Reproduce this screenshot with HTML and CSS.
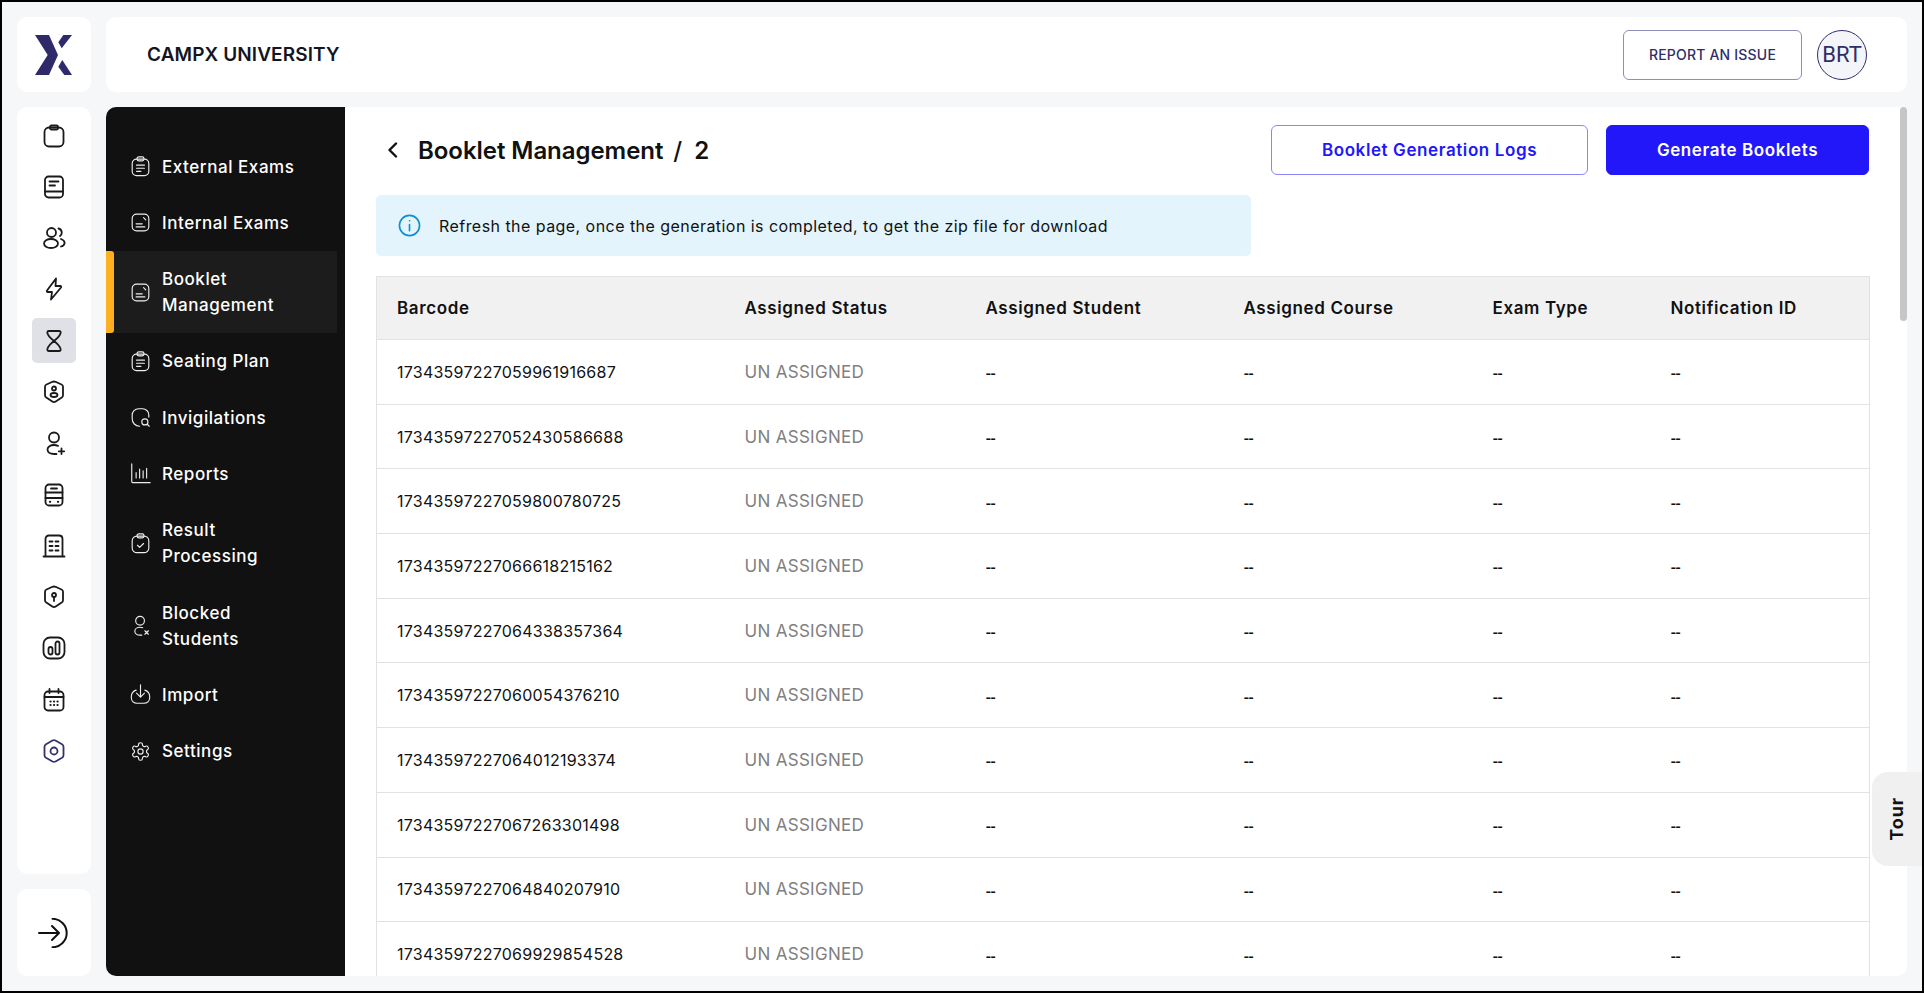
FILE: index.html
```html
<!DOCTYPE html>
<html lang="en">
<head>
<meta charset="utf-8">
<title>Booklet Management</title>
<link rel="stylesheet" href="styles.css">
</head>
<body>
<div class="frame">
  <div class="shell">
    <div class="logo-card">
      <svg class="logo" viewBox="0 0 38 40"><path d="M0 0h14l9 20-9 20H0l12.700-20z"/><path d="M37 0h-8.700l-5 7.300 3.400 6z"/><path d="M37 40h-7.700l-6-8.300 4-6.700z"/></svg>
    </div>
    <header class="topbar">
      <div class="brand">CAMPX UNIVERSITY</div>
      <div class="top-actions">
        <button class="report">REPORT AN ISSUE</button>
        <div class="avatar">BRT</div>
      </div>
    </header>
    <div class="rail-col">
      <nav class="rail">
        <a class="rail-item"><svg viewBox="0 0 24 24"><rect x="2.500" y="3.500" width="19" height="19" rx="4.500"/><rect x="8" y="1.500" width="8" height="4" rx="1.500"/></svg></a>
        <a class="rail-item"><svg viewBox="0 0 24 24"><rect x="3" y="1.500" width="18" height="21" rx="3.500"/><path d="M3 16.500h18M7.500 6.500h9M7.500 10.500h5.500"/></svg></a>
        <a class="rail-item"><svg viewBox="0 0 24 24"><circle cx="9.500" cy="6.500" r="4.500"/><ellipse cx="9" cy="17.500" rx="7" ry="4.500"/><path d="M16.500 2.500a4.200 4.200 0 0 1 1.500 7.500M19 13c2.500 1 4 2.500 3.500 4.500-.3 1.500-1.500 2.500-3.500 3"/></svg></a>
        <a class="rail-item"><svg viewBox="0 0 24 24"><path d="M14 1.500 5 13.500c-.5.7 0 1.500.7 1.500H10l-1 7.500 10-12c.5-.7 0-1.500-.7-1.500H13.500z"/></svg></a>
        <a class="rail-item active"><svg viewBox="0 0 24 24"><path d="M7 2h10c1.500 0 2 1.200 1.500 2.500C17.500 7.500 14.500 10 12 12 9.500 10 6.500 7.500 5.500 4.500 5 3.200 5.500 2 7 2zM7 22h10c1.500 0 2-1.200 1.500-2.500C17.500 16.500 14.500 14 12 12 9.500 14 6.500 16.500 5.500 19.500 5 20.800 5.500 22 7 22z"/></svg></a>
        <a class="rail-item"><svg viewBox="0 0 24 24"><path d="M10.500 1.800 4.500 4.500C3.500 5 3 5.700 3 6.800v8.400c0 1 .5 1.800 1.300 2.400l6 4c1 .7 2.400.7 3.400 0l6-4c.8-.6 1.300-1.400 1.300-2.400V6.800c0-1.100-.5-1.800-1.500-2.300l-6-2.700c-1-.4-2-.4-3 0z"/><circle cx="12" cy="8.500" r="2"/><ellipse cx="12" cy="15" rx="3.500" ry="2"/></svg></a>
        <a class="rail-item"><svg viewBox="0 0 24 24"><circle cx="12" cy="6.500" r="5"/><path d="M16 14.800c-1.200-.5-2.600-.8-4-.8-3.500 0-6.500 2-6.500 4.500S8 23 12 23h2.500M19.500 17.500v5.500M16.800 20.300h5.400"/></svg></a>
        <a class="rail-item"><svg viewBox="0 0 24 24"><rect x="3.500" y="1.500" width="17" height="21" rx="3.500"/><path d="M3.500 9.500h17M3.500 15h17M9 5.500h6"/><path class="dot" d="M8 18.800h.1M16 18.800h.1"/></svg></a>
        <a class="rail-item"><svg viewBox="0 0 24 24"><path d="M1.500 22.500h21M3.500 22.500V5c0-2 1.500-3.500 3.500-3.500h10c2 0 3.500 1.500 3.500 3.500v17.500M7.500 7.500h3M13.500 7.500h3M7.500 12h3M13.500 12h3M7.500 16.500h3M13.500 16.500h3"/></svg></a>
        <a class="rail-item"><svg viewBox="0 0 24 24"><path d="M10.500 1.800 4.500 4.500C3.500 5 3 5.700 3 6.800v8.400c0 1 .5 1.800 1.300 2.400l6 4c1 .7 2.400.7 3.400 0l6-4c.8-.6 1.300-1.400 1.300-2.400V6.800c0-1.100-.5-1.800-1.500-2.300l-6-2.700c-1-.4-2-.4-3 0z"/><circle cx="12" cy="10" r="2"/><path d="M12 12v4"/></svg></a>
        <a class="rail-item"><svg viewBox="0 0 24 24"><rect x="1.500" y="1.500" width="21" height="21" rx="6.500"/><rect x="6.500" y="11" width="4" height="7.500" rx="2"/><rect x="13.500" y="5.500" width="4" height="13" rx="2"/></svg></a>
        <a class="rail-item"><svg viewBox="0 0 24 24"><rect x="2.500" y="3.500" width="19" height="19" rx="3.500"/><path d="M2.500 9h19M7.500 1v4M16.500 1v4"/><path class="dot" d="M8.500 13.500h.1M12 13.500h.1M15.500 13.500h.1M8.500 17h.1M12 17h.1M15.500 17h.1"/></svg></a>
        <a class="rail-item brand-icon"><svg viewBox="0 0 24 24"><path d="M10.500 1.500 4 5.200C3 5.800 2.500 6.700 2.500 7.800v8.400c0 1.100.5 2 1.500 2.600l6.500 3.700c1 .5 2 .5 3 0l6.500-3.700c1-.6 1.500-1.500 1.500-2.600V7.800c0-1.100-.5-2-1.500-2.600l-6.500-3.700c-1-.5-2-.5-3 0z"/><circle cx="12" cy="12" r="3.500"/></svg></a>
      </nav>
      <div class="rail-foot">
        <svg viewBox="0 0 32 30"><path d="M1 15h20M14 8l7 7-7 7M14.500 .8a14.200 14.200 0 0 1 0 28.400"/></svg>
      </div>
    </div>
    <div class="workspace">
      <aside class="menu">
        <a class="menu-item"><svg viewBox="0 0 24 24"><rect x="2.500" y="3.500" width="19" height="19" rx="5"/><rect x="8" y="1" width="8" height="4.500" rx="2"/><path d="M7.500 10.500h9M7.500 14h9M7.500 17.500h5"/></svg><span>External Exams</span></a>
        <a class="menu-item"><svg viewBox="0 0 24 24"><rect x="2.500" y="2.500" width="19" height="19" rx="5"/><path d="M7 13.500h7M7 17h10M15.500 6.500l2.500 2.500"/></svg><span>Internal Exams</span></a>
        <a class="menu-item active"><svg viewBox="0 0 24 24"><rect x="2.500" y="2.500" width="19" height="19" rx="5"/><path d="M7 13.500h7M7 17h10M15.500 6.500l2.500 2.500"/></svg><span>Booklet Management</span></a>
        <a class="menu-item"><svg viewBox="0 0 24 24"><rect x="2.500" y="3.500" width="19" height="19" rx="5"/><rect x="8" y="1" width="8" height="4.500" rx="2"/><path d="M7.500 10.500h9M7.500 14h9M7.500 17.500h5"/></svg><span>Seating Plan</span></a>
        <a class="menu-item"><svg viewBox="0 0 24 24"><path d="M21.500 11.500V9C21.500 5 18 2 14.500 2H10C5.500 2 2.500 5.500 2.500 9.500v4C2.500 18 6 22 11 22"/><circle cx="17" cy="17" r="3.500"/><path d="M20 20l2 2"/></svg><span>Invigilations</span></a>
        <a class="menu-item"><svg viewBox="0 0 24 24"><path d="M2 1v20.500c0 .5.500 1 1 1h20M7 17v-6M11 17V7M15 17v-8M19 17V6"/></svg><span>Reports</span></a>
        <a class="menu-item"><svg viewBox="0 0 24 24"><rect x="2.500" y="3.500" width="19" height="19" rx="5.500"/><rect x="8" y="1" width="8" height="4.500" rx="2"/><path d="M8.500 14l2.500 2.500 4.500-4.500"/></svg><span>Result Processing</span></a>
        <a class="menu-item"><svg viewBox="0 0 24 24"><circle cx="11.500" cy="6.500" r="5"/><path d="M14.500 14.500c-1-.4-2-.5-3-.5-3.500 0-6 2-6 4.500s2.500 4.500 6 4.500h2M17 18l4 4M21 18l-4 4"/></svg><span>Blocked Students</span></a>
        <a class="menu-item"><svg viewBox="0 0 24 24"><path d="M12 1v14M7.500 10.500 12 15l4.500-4.500M7 7c-3 1-5.500 3.500-5.500 7.500v1c0 4 3 6.500 6.500 6.500h8c3.500 0 6.500-2.500 6.500-6.500v-1c0-4-2.500-6.500-5.500-7.500"/></svg><span>Import</span></a>
        <a class="menu-item"><svg viewBox="0 0 24 24"><path d="M12.220 2h-.44a2 2 0 0 0-2 2v.18a2 2 0 0 1-1 1.730l-.43.25a2 2 0 0 1-2 0l-.15-.08a2 2 0 0 0-2.730.73l-.22.38a2 2 0 0 0 .73 2.730l.15.1a2 2 0 0 1 1 1.720v.51a2 2 0 0 1-1 1.740l-.15.09a2 2 0 0 0-.73 2.730l.22.38a2 2 0 0 0 2.730.73l.15-.08a2 2 0 0 1 2 0l.43.25a2 2 0 0 1 1 1.730V20a2 2 0 0 0 2 2h.44a2 2 0 0 0 2-2v-.18a2 2 0 0 1 1-1.730l.43-.25a2 2 0 0 1 2 0l.15.08a2 2 0 0 0 2.730-.73l.22-.39a2 2 0 0 0-.73-2.730l-.15-.08a2 2 0 0 1-1-1.740v-.5a2 2 0 0 1 1-1.740l.15-.09a2 2 0 0 0 .73-2.730l-.22-.38a2 2 0 0 0-2.730-.73l-.15.08a2 2 0 0 1-2 0l-.43-.25a2 2 0 0 1-1-1.730V4a2 2 0 0 0-2-2z"/><circle cx="12" cy="12" r="3"/></svg><span>Settings</span></a>
      </aside>
      <main class="content">
        <div class="page-head">
          <div class="crumbs">
            <svg class="back" viewBox="0 0 11 16"><path d="M9 1.500 2.500 8 9 14.500"/></svg>
            <span class="crumb-title">Booklet Management</span>
            <span class="crumb-sep">/</span>
            <span class="crumb-id">2</span>
          </div>
          <div class="head-actions">
            <button class="btn-outline">Booklet Generation Logs</button>
            <button class="btn-solid">Generate Booklets</button>
          </div>
        </div>
        <div class="alert">
          <svg viewBox="0 0 24 24"><circle cx="12" cy="12" r="10.500"/><path d="M12 11v6.500M12 7h.1"/></svg>
          <span>Refresh the page, once the generation is completed, to get the zip file for download</span>
        </div>
        <table class="grid">
          <colgroup>
            <col class="c1"><col class="c2"><col class="c3"><col class="c4"><col class="c5"><col class="c6">
          </colgroup>
          <thead>
            <tr><th>Barcode</th><th>Assigned Status</th><th>Assigned Student</th><th>Assigned Course</th><th>Exam Type</th><th>Notification ID</th></tr>
          </thead>
          <tbody>
            <tr><td>17343597227059961916687</td><td class="status">UN ASSIGNED</td><td class="nil">--</td><td class="nil">--</td><td class="nil">--</td><td class="nil">--</td></tr>
            <tr><td>17343597227052430586688</td><td class="status">UN ASSIGNED</td><td class="nil">--</td><td class="nil">--</td><td class="nil">--</td><td class="nil">--</td></tr>
            <tr><td>17343597227059800780725</td><td class="status">UN ASSIGNED</td><td class="nil">--</td><td class="nil">--</td><td class="nil">--</td><td class="nil">--</td></tr>
            <tr><td>17343597227066618215162</td><td class="status">UN ASSIGNED</td><td class="nil">--</td><td class="nil">--</td><td class="nil">--</td><td class="nil">--</td></tr>
            <tr><td>17343597227064338357364</td><td class="status">UN ASSIGNED</td><td class="nil">--</td><td class="nil">--</td><td class="nil">--</td><td class="nil">--</td></tr>
            <tr><td>17343597227060054376210</td><td class="status">UN ASSIGNED</td><td class="nil">--</td><td class="nil">--</td><td class="nil">--</td><td class="nil">--</td></tr>
            <tr><td>17343597227064012193374</td><td class="status">UN ASSIGNED</td><td class="nil">--</td><td class="nil">--</td><td class="nil">--</td><td class="nil">--</td></tr>
            <tr><td>17343597227067263301498</td><td class="status">UN ASSIGNED</td><td class="nil">--</td><td class="nil">--</td><td class="nil">--</td><td class="nil">--</td></tr>
            <tr><td>17343597227064840207910</td><td class="status">UN ASSIGNED</td><td class="nil">--</td><td class="nil">--</td><td class="nil">--</td><td class="nil">--</td></tr>
            <tr><td>17343597227069929854528</td><td class="status">UN ASSIGNED</td><td class="nil">--</td><td class="nil">--</td><td class="nil">--</td><td class="nil">--</td></tr>
          </tbody>
        </table>
        <div class="scroll-thumb"></div>
      </main>
    </div>
  </div>
  <div class="tour"><span>Tour</span></div>
</div>
</body>
</html>
```
FILE: styles.css
```css
* { box-sizing: border-box; }
html, body { margin: 0; height: 100%; overflow: hidden; }
body { font-family: Inter, "Noto Sans", sans-serif; color: #111; }
a { display: block; }
button { font-family: inherit; cursor: pointer; }

.frame {
  position: relative;
  width: 100vw;
  height: 100vh;
  border: 2px solid #000;
  background: #f6f7f9;
  overflow: hidden;
}
.shell {
  display: grid;
  grid-template-columns: 74px 1801px;
  grid-template-rows: 75px 869px;
  column-gap: 15px;
  row-gap: 15px;
  padding: 15px 0 0 15px;
}
.logo-card {
  background: #fff;
  border-radius: 10px;
  display: flex;
  align-items: center;
  justify-content: center;
}
.logo { width: 38px; height: 40px; fill: #2f2b6b; }
.topbar {
  background: #fff;
  border-radius: 10px;
  display: flex;
  align-items: center;
  justify-content: space-between;
  padding: 0 40px 0 41px;
}
.brand { font-size: 19px; font-weight: 600; letter-spacing: .1px; color: #15151f; }
.top-actions { display: flex; align-items: center; gap: 15px; }
.report {
  width: 179px;
  height: 50px;
  background: #fff;
  border: 1px solid #8f8db9;
  border-radius: 6px;
  color: #302e69;
  font-size: 14px;
  font-weight: 500;
  letter-spacing: .2px;
}
.avatar {
  width: 50px;
  height: 50px;
  border-radius: 50%;
  border: 1px solid #302e69;
  background: #f4f5f9;
  color: #302e69;
  font-family: Roboto, sans-serif;
  font-size: 22px;
  display: flex;
  align-items: center;
  justify-content: center;
}

.rail-col { display: flex; flex-direction: column; gap: 15px; }
.rail {
  height: 767px;
  background: #fff;
  border-radius: 10px;
  padding: 6px 15px 0;
  display: flex;
  flex-direction: column;
  gap: 6.300px;
}
.rail-item {
  height: 45px;
  border-radius: 5px;
  display: flex;
  align-items: center;
  justify-content: center;
  flex: none;
}
.rail-item svg { width: 24px; height: 24px; fill: none; stroke: #1a1a1a; stroke-width: 1.800; stroke-linecap: round; stroke-linejoin: round; }
.rail-item .dot { stroke-width: 2.200; }
.rail-item.active { background: #e0e1e6; }
.brand-icon svg { stroke: #34316f; }
.rail-foot {
  flex: 1;
  background: #fff;
  border-radius: 10px;
  display: flex;
  align-items: center;
  justify-content: center;
}
.rail-foot svg { width: 32px; height: 30px; fill: none; stroke: #111; stroke-width: 2; stroke-linecap: round; stroke-linejoin: round; }

.workspace { display: flex; height: 869px; }
.menu {
  width: 239px;
  flex: none;
  background: #111;
  border-radius: 10px 0 0 10px;
  padding: 31.400px 8px 0 0;
}
.menu-item {
  position: relative;
  display: flex;
  align-items: center;
  gap: 11.500px;
  padding: 15.150px 34px 15.150px 23.500px;
  color: #fff;
  font-size: 17px;
  line-height: 26px;
  font-weight: 500;
  letter-spacing: .55px;
}
.menu-item svg { width: 21px; height: 21px; flex: none; fill: none; stroke: #eee; stroke-width: 1.300; stroke-linecap: round; stroke-linejoin: round; }
.menu-item.active { background: #1c1c1c; }
.menu-item.active::before {
  content: "";
  position: absolute;
  left: 0;
  top: 0;
  bottom: 0;
  width: 8px;
  background: #ffb020;
  border-radius: 0 3px 3px 0;
}

.content {
  position: relative;
  flex: 1;
  min-width: 0;
  height: 869px;
  background: #fff;
  border-radius: 0 0 10px 0;
  padding: 18px 38px 0 31px;
  overflow: hidden;
}
.page-head { display: flex; align-items: center; justify-content: space-between; height: 50px; }
.crumbs { display: flex; align-items: center; padding-left: 11px; font-size: 24px; font-weight: 600; color: #111; }
.back { width: 11px; height: 16px; margin-right: 20px; fill: none; stroke: #111; stroke-width: 2.400; stroke-linecap: round; stroke-linejoin: round; }
.crumb-title { letter-spacing: -.05px; }
.crumb-sep { margin: 0 12px 0 10px; font-weight: 500; }
.crumb-id { font-weight: 600; }
.head-actions { display: flex; gap: 18px; }
.btn-outline, .btn-solid {
  height: 50px;
  border-radius: 6px;
  font-size: 17px;
  font-weight: 600;
  letter-spacing: .6px;
}
.btn-outline { width: 317px; background: #fff; border: 1px solid #8a86fa; color: #2117fb; }
.btn-solid { width: 263px; background: #2217f9; border: 1px solid #2217f9; color: #fff; }

.alert {
  margin-top: 20px;
  width: 875px;
  height: 61px;
  border-radius: 5px;
  background: #e3f4fc;
  display: flex;
  align-items: center;
  gap: 18px;
  padding-left: 22px;
  font-size: 16px;
  color: #111;
  letter-spacing: .45px;
}
.alert svg { width: 23px; height: 23px; flex: none; fill: none; stroke: #0d8fd8; stroke-width: 1.700; stroke-linecap: round; }

.grid {
  margin-top: 20px;
  width: 1493px;
  border-collapse: collapse;
  table-layout: fixed;
  font-size: 16px;
  border-left: 1px solid #e2e2e2;
  border-right: 1px solid #e2e2e2;
  border-top: 1px solid #e2e2e2;
}
.c1 { width: 348px; }
.c2 { width: 241px; }
.c3 { width: 258px; }
.c4 { width: 249px; }
.c5 { width: 178px; }
.c6 { width: 219px; }
.grid th, .grid td { padding: 0 20px; text-align: left; white-space: nowrap; }
.grid th {
  height: 63px;
  background: #f1f1f1;
  font-size: 17px;
  font-weight: 600;
  letter-spacing: .62px;
  border-bottom: 1px solid #e2e2e2;
}
.grid td {
  height: 64.700px;
  border-bottom: 1px solid #e2e2e2;
  letter-spacing: .24px;
  font-weight: 400;
}
.grid .status { color: #808080; font-size: 17px; letter-spacing: .3px; }
.grid .nil { font-size: 12px; font-weight: 800; letter-spacing: -.9px; padding-top: 4px; }

.scroll-thumb {
  position: absolute;
  top: 0;
  right: 0;
  width: 7px;
  height: 214px;
  border-radius: 4px;
  background: #c6c6c6;
}
.tour {
  position: absolute;
  right: 0;
  top: 770px;
  width: 50px;
  height: 94px;
  background: #f0f0f0;
  border-radius: 16px 0 0 16px;
  display: flex;
  align-items: center;
  justify-content: center;
  font-size: 18px;
  font-weight: 700;
  color: #111;
}
.tour span { writing-mode: vertical-rl; transform: rotate(180deg); letter-spacing: .9px; margin-right: 1px; }
```
